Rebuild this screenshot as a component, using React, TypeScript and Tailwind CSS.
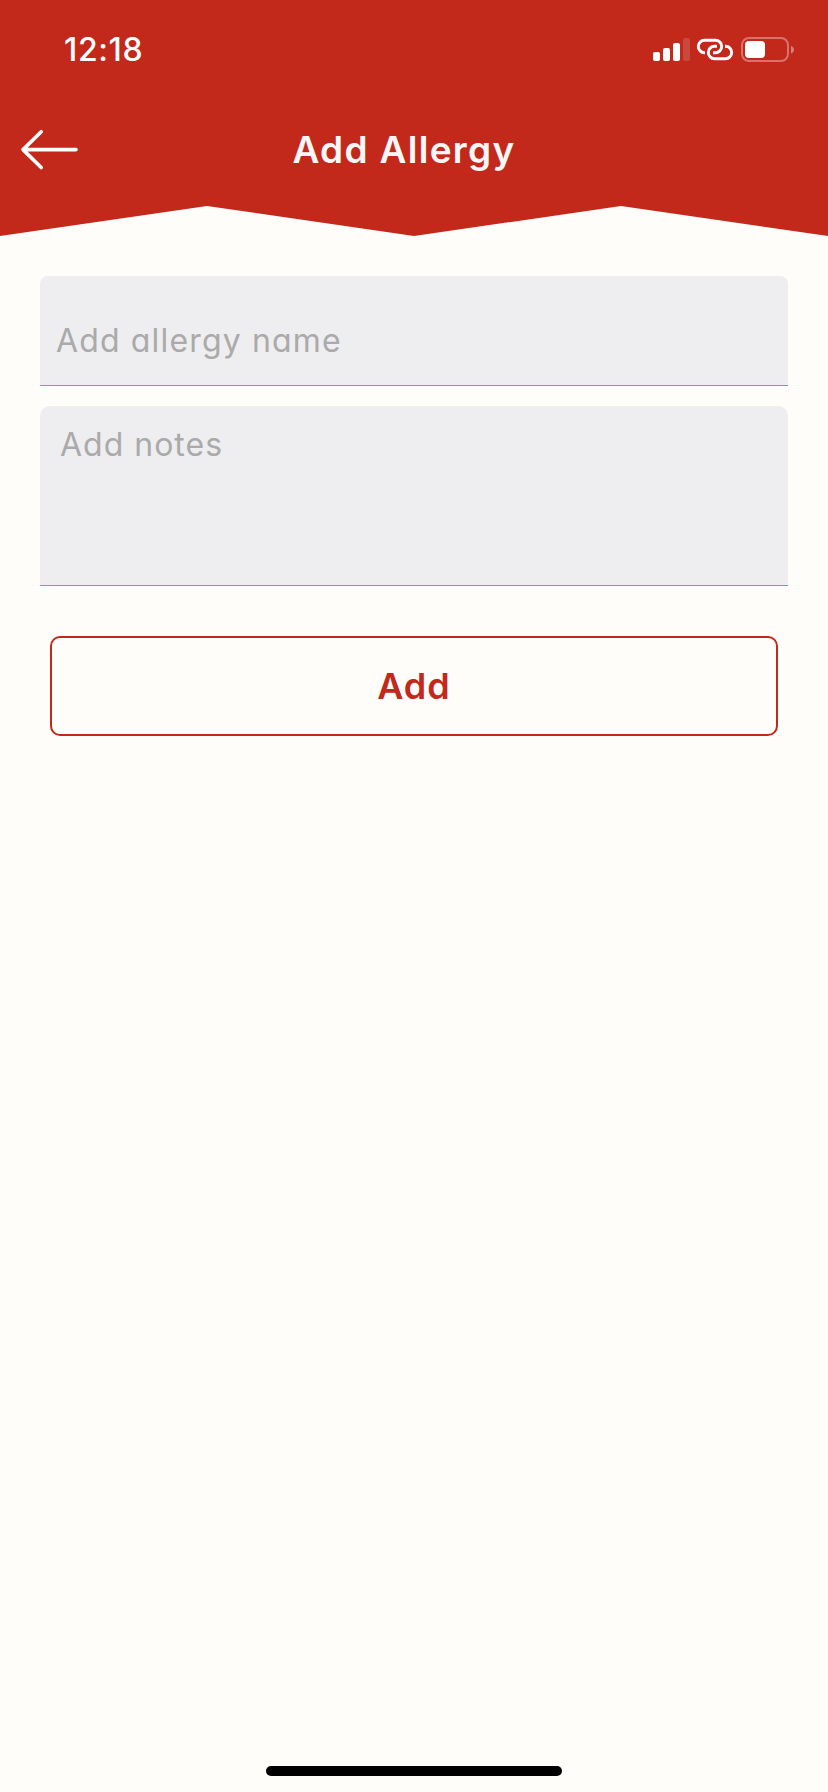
import React from 'react';

const StatusIcons = () => (
  <svg width="144" height="30" viewBox="652 35 144 30" fill="none">
    <rect x="653" y="52" width="7" height="9" rx="2" fill="#fff" />
    <rect x="663" y="48" width="7" height="13" rx="2" fill="#fff" />
    <rect x="673" y="43" width="7" height="18" rx="2" fill="#fff" />
    <rect x="683" y="38" width="7" height="23" rx="2" fill="#fff" fillOpacity="0.15" />
    <g stroke="#fff" strokeWidth="2.9" strokeLinecap="butt">
      <path d="M705 52.7h-.5a6.2 6.2 0 0 1 0-12.4h11a6.2 6.2 0 0 1 0 12.4h-2.500" />
      <path d="M725 46.3h.5a6.2 6.2 0 0 1 0 12.4h-11a6.2 6.2 0 0 1 0-12.4h2.500" />
    </g>
    <rect x="742" y="38" width="46" height="23" rx="7" stroke="#fff" strokeOpacity="0.35" strokeWidth="2" />
    <rect x="745" y="41" width="20" height="17" rx="4" fill="#fff" />
    <path d="M791 46c1.800.6 3 2 3 3.800s-1.200 3.200-3 3.800z" fill="#fff" fillOpacity="0.4" />
  </svg>
);

const Header = () => (
  <header>
    <div className="h-[206px] bg-[#c2291b]">
      <div className="flex h-[100px] items-center justify-between pr-8 pl-16">
        <span className="text-[32px] font-medium tracking-[0.6px] text-white">12:18</span>
        <StatusIcons />
      </div>
      <div className="grid h-[100px] grid-cols-[100px_1fr_120px] items-center">
        <button aria-label="Back" className="pl-5">
          <svg width="60" height="44" viewBox="20 128 60 44" fill="none" stroke="#fff" strokeWidth="3.6" strokeLinecap="round" strokeLinejoin="round">
            <path d="M76 149.600H23M41.200 131.700L23 149.600l18.200 17.900" />
          </svg>
        </button>
        <h1 className="text-center text-[37px] font-semibold tracking-[1.3px] whitespace-nowrap text-[#f7f7f7]">Add Allergy</h1>
      </div>
    </div>
    <svg className="block w-full" height="30" viewBox="0 0 828 30">
      <path d="M0 0h828v30L621 0 414 30 207 0 0 30z" fill="#c2291b" />
    </svg>
  </header>
);

const App = () => {
  return (
    <div className="flex h-[1792px] w-[828px] flex-col bg-[#fffdfa] font-['Inter',sans-serif] [font-feature-settings:'cv11']">
      <Header />
      <main className="flex flex-1 flex-col px-10 pt-10">
        <input
          placeholder="Add allergy name"
          className="h-[110px] rounded-t-[8px] border-b border-[#5aada6] bg-[#eeeef0] px-4 pt-5 text-[32px] tracking-[1.15px] outline-none placeholder:text-[#aaaaaa]"
        />
        <textarea
          placeholder="Add notes"
          className="mt-5 h-[180px] resize-none rounded-t-[10px] border-b border-[#5aada6] bg-[#eeeef0] px-5 pt-[15px] text-[32px] tracking-[1px] outline-none placeholder:text-[#aaaaaa]"
        />
        <button className="mx-[10px] mt-[50px] h-[100px] rounded-[10px] border-2 border-[#c2291b] text-[36px] font-semibold tracking-[1px] text-[#c2291b]">
          Add
        </button>
      </main>
      <div className="mx-auto mb-4 h-[10px] w-[296px] rounded-full bg-black" />
    </div>
  );
};

export default App;
